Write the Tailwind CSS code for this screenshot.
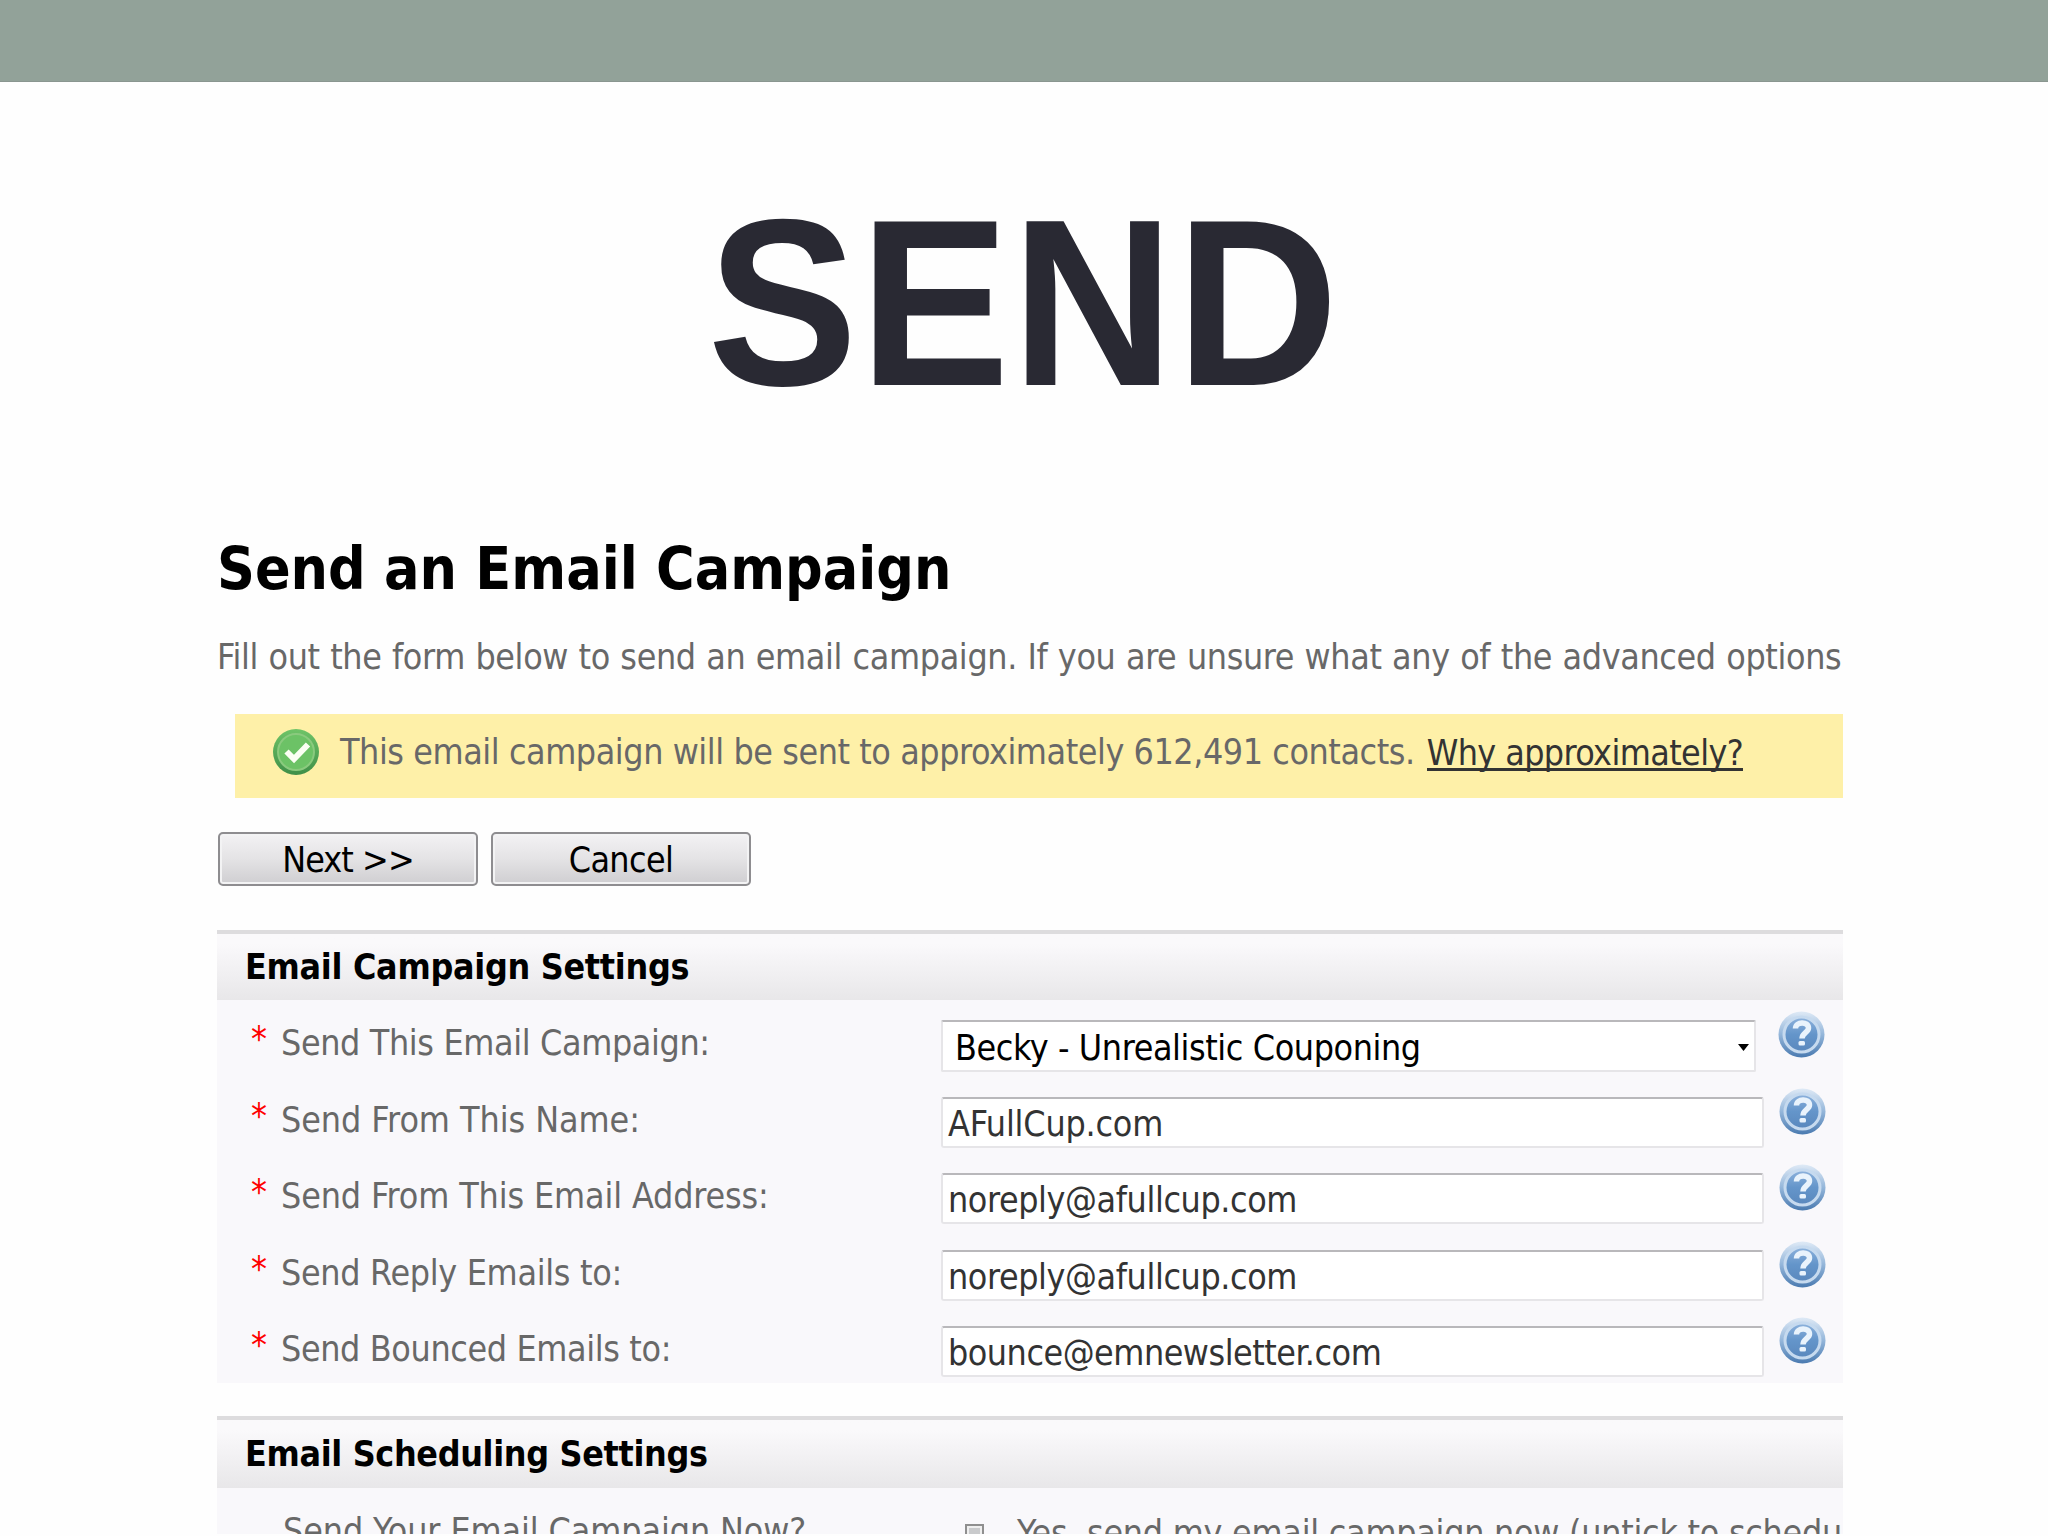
<!DOCTYPE html>
<html lang="en">
  <head>
    <meta charset="utf-8" />
    <meta content="width=device-width, initial-scale=1.0" name="viewport" />
    <title>Send an Email Campaign</title>
    <script src="https://cdn.jsdelivr.net/npm/@tailwindcss/browser@4"></script>
  </head>
  <body class="bg-[#fefefe]">
    <div class="w-[2048px] h-[1534px] overflow-hidden flex flex-col font-['DejaVu_Sans_Condensed','DejaVu_Sans',sans-serif] text-[35.5px] leading-[40px] text-[#686868] whitespace-nowrap">
      <!-- Slide header -->
      <div class="h-[82px] shrink-0 bg-[#92a299] border-b border-[#8a9690]"></div>
      <div class="h-[442px] shrink-0 flex items-center justify-center">
        <h1 class="font-['Liberation_Sans',Arial,sans-serif] font-bold text-[225px] leading-none tracking-[2px] text-[#292933] scale-y-[1.053]">SEND</h1>
      </div>

      <!-- Campaign page -->
      <main class="ml-[217px] w-[1626px] shrink-0 pt-[9px]">
        <h2 class="text-[58.5px] leading-[72px] font-bold text-black">Send an Email Campaign</h2>
        <p class="mt-[28px] leading-[48px] tracking-[-0.36px] [word-spacing:0.7px]">Fill out the form below to send an email campaign. If you are unsure what any of the advanced options</p>

        <div class="mt-[33px] ml-[18px] h-[84px] pl-[37px] pb-[8px] flex items-center bg-[#fef0a8]">
          <svg class="w-[48px] h-[48px] mr-[20px]" viewBox="0 0 48 48">
            <defs>
              <linearGradient id="green" x1="0" y1="0" x2="0" y2="1">
                <stop offset="0" stop-color="#6fc468" />
                <stop offset="1" stop-color="#3f8f48" />
              </linearGradient>
            </defs>
            <circle cx="24" cy="24" r="23" fill="url(#green)" />
            <circle cx="24" cy="24" r="18" fill="#6cc266" stroke="#8aca7e" stroke-width="2" />
            <path d="M14.500 23.500l7.500 7.500 14-14.500" fill="none" stroke="#fbfff4" stroke-width="6" />
          </svg>
          <span class="tracking-[-0.43px]">This email campaign will be sent to approximately 612,491 contacts.</span>
          <a class="ml-[12px] tracking-[-0.6px] text-[#333] border-b-[3px] border-[#333] h-[38px] leading-[40px]">Why approximately?</a>
        </div>

        <div class="mt-[34px] ml-[1px] flex gap-[13px] text-black">
          <button class="w-[260px] h-[54px] pt-[2px] rounded-[5px] border-2 border-[#8e8d90] bg-linear-to-b from-[#f3f2f4] from-0% via-[#e4e3e5] via-50% to-[#cfced1] shadow-[inset_0_0_0_2px_#f3f3f4] tracking-[-0.9px]">Next &gt;&gt;</button>
          <button class="w-[260px] h-[54px] pt-[2px] rounded-[5px] border-2 border-[#8e8d90] bg-linear-to-b from-[#f3f2f4] from-0% via-[#e4e3e5] via-50% to-[#cfced1] shadow-[inset_0_0_0_2px_#f3f3f4] tracking-[-0.6px]">Cancel</button>
        </div>

        <!-- Email Campaign Settings -->
        <section class="mt-[44px] border-t-4 border-[#dddcde] bg-[#f9f8fb]">
          <h3 class="h-[66px] pl-[28px] pb-[1px] flex items-center font-bold text-black tracking-[-0.28px] bg-linear-to-b from-[#faf9fb] from-15% to-[#e8e7e9]">Email Campaign Settings</h3>
          <div id="rows"></div>
        </section>

        <!-- Email Scheduling Settings -->
        <section class="mt-[33px] border-t-4 border-[#dddcde] bg-[#f9f8fb]">
          <h3 class="h-[68px] pl-[28px] flex items-center font-bold text-black tracking-[-0.33px] bg-linear-to-b from-[#faf9fb] from-15% to-[#e8e7e9]">Email Scheduling Settings</h3>
          <div class="h-[76px] pl-[66px] flex items-start overflow-hidden">
            <span class="w-[682px] shrink-0 mt-[23px] tracking-[-0.1px]">Send Your Email Campaign Now?</span>
            <span class="mt-[36px] w-[19px] h-[19px] shrink-0 border-2 border-[#8f8f8f] bg-[#c9cacc] shadow-[inset_0_0_0_2px_#efefef]"></span>
            <span class="ml-[33px] mt-[25px] shrink-0 tracking-[-0.26px]">Yes, send my email campaign now (untick to schedu</span>
          </div>
        </section>
      </main>
    </div>

    <!-- Help icon, cloned into every row -->
    <template id="help-icon">
      <svg class="mt-[11px] w-[47px] h-[47px]" viewBox="0 0 47 47">
        <defs>
          <linearGradient id="ring" x1="0" y1="0" x2="0" y2="1">
            <stop offset="0" stop-color="#dfeaf6" />
            <stop offset="0.5" stop-color="#94b6da" />
            <stop offset="1" stop-color="#4a7ab0" />
          </linearGradient>
          <linearGradient id="disc" x1="0" y1="0" x2="0" y2="1">
            <stop offset="0" stop-color="#8db2dc" />
            <stop offset="0.5" stop-color="#6495ca" />
            <stop offset="1" stop-color="#5a88bd" />
          </linearGradient>
        </defs>
        <circle cx="23.5" cy="23.5" r="23" fill="url(#ring)" />
        <circle cx="23.5" cy="23.5" r="17.5" fill="url(#disc)" stroke="#c6daef" stroke-width="3" />
        <path d="M17.5 17.500c0-7 13-7.500 13-.5 0 4.500-6.500 5-6.500 10.500" fill="none" stroke="#e9f3fc" stroke-width="5.500" />
        <rect x="20.500" y="30" width="6.500" height="4.500" rx="1.500" fill="#e9f3fc" />
      </svg>
    </template>

    <script>
      const rows = [
        { label: "Send This Email Campaign:", labelClass: "tracking-[-0.36px]", value: "Becky - Unrealistic Couponing", valueClass: "tracking-[-0.4px]", select: true },
        { label: "Send From This Name:", labelClass: "tracking-[-0.05px]", value: "AFullCup.com", valueClass: "tracking-[-0.2px]" },
        { label: "Send From This Email Address:", labelClass: "tracking-[-0.13px]", value: "noreply@afullcup.com", valueClass: "tracking-[-0.4px]" },
        { label: "Send Reply Emails to:", labelClass: "tracking-[-0.3px]", value: "noreply@afullcup.com", valueClass: "tracking-[-0.4px]" },
        { label: "Send Bounced Emails to:", labelClass: "tracking-[-0.36px]", value: "bounce@emnewsletter.com", valueClass: "tracking-[-0.48px]" },
      ];
      const icon = document.getElementById("help-icon").innerHTML;

      document.getElementById("rows").innerHTML = rows
        .map((row) => {
          const field = row.select
            ? `<div class="mt-[20px] w-[815px] h-[52px] mr-[22px] pl-[12px] pr-[5px] flex items-center justify-between rounded-[2px] border-2 border-[#e6e5e8] border-t-[#b9b8bb] bg-white text-black">
                <span class="${row.valueClass} mt-[4px]">${row.value}</span>
                <svg class="w-[11px] h-[7px] mt-[2px]" viewBox="0 0 11 7"><path d="M0 0h11L5.500 7z" /></svg>
              </div>`
            : `<div class="mt-[20px] w-[823px] h-[51px] mr-[15px] pl-[5px] flex items-center rounded-[3px] border-2 border-[#e6e5e8] border-t-[#b9b8bb] bg-white text-[#333]">
                <span class="${row.valueClass} mt-[3px]">${row.value}</span>
              </div>`;
          return `<div class="h-[76.6px] pl-[34px] flex items-start">
              <span class="w-[30px] mt-[19px] text-[#f00]">*</span>
              <span class="w-[660px] mt-[23px] ${row.labelClass}">${row.label}</span>
              ${field}
              ${icon}
            </div>`;
        })
        .join("");
    </script>
  </body>
</html>
